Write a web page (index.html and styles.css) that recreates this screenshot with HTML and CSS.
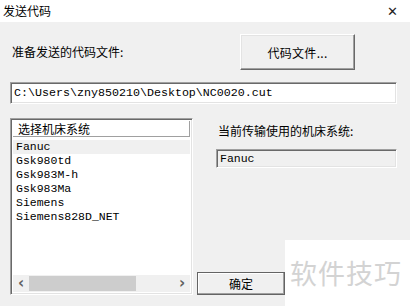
FILE: index.html
```html
<!DOCTYPE html>
<html>
<head>
<meta charset="utf-8">
<link rel="stylesheet" href="styles.css">
</head>
<body>
<div class="window">
  <div class="titlebar">
    <span class="title">发送代码</span>
    <span class="close">✕</span>
  </div>
  <div class="body">
    <div class="row1">
      <span class="label">准备发送的代码文件:</span>
      <button class="btn btn-file">代码文件...</button>
    </div>
    <div class="path">C:\Users\zny850210\Desktop\NC0020.cut</div>
    <div class="lower">
      <div class="listbox">
        <div class="list-header">选择机床系统</div>
        <div class="items">
          <div class="item selected">Fanuc</div>
          <div class="item">Gsk980td</div>
          <div class="item">Gsk983M-h</div>
          <div class="item">Gsk983Ma</div>
          <div class="item">Siemens</div>
          <div class="item">Siemens828D_NET</div>
        </div>
        <div class="hscroll">
          <span class="arrow">&lsaquo;</span>
          <span class="track"><span class="thumb"></span></span>
          <span class="arrow">&rsaquo;</span>
        </div>
      </div>
      <div class="right">
        <div class="rlabel">当前传输使用的机床系统:</div>
        <div class="current">Fanuc</div>
        <div class="spacer"></div>
        <button class="btn btn-ok">确定</button>
      </div>
    </div>
    <div class="watermark">软件技巧</div>
  </div>
</div>
</body>
</html>
```
FILE: styles.css
```css
html, body {
  margin: 0;
  padding: 0;
  background: #f0f0f0;
}
.window {
  width: 410px;
  height: 306px;
  overflow: hidden;
  font-family: "Noto Sans CJK SC", "Liberation Sans", sans-serif;
  font-size: 12px;
  color: #000;
}
.titlebar {
  height: 22px;
  background: #fff;
  display: flex;
  align-items: center;
  justify-content: space-between;
  padding: 0 12px 0 3px;
}
.title {
  font-size: 12px;
  line-height: 22px;
}
.close {
  font-size: 13px;
  color: #222;
  font-family: "DejaVu Sans", sans-serif;
}
.body {
  position: relative;
  height: 284px;
  background: #f0f0f0;
}
.row1 {
  display: flex;
  align-items: center;
  justify-content: space-between;
  padding: 12px 55px 0 12px;
}
.label {
  font-size: 12px;
  line-height: 16px;
}
.btn {
  font-family: "Noto Sans CJK SC", "Liberation Sans", sans-serif;
  font-size: 12px;
  color: #000;
  background: #f0f0f0;
  padding: 0;
  margin: 0;
  cursor: default;
}
.btn-file {
  width: 115px;
  height: 36px;
  border: 1px solid;
  border-color: #fff #696969 #696969 #fff;
  box-shadow: inset -1px -1px #a0a0a0, inset 1px 1px #e3e3e3;
  letter-spacing: 0.3px;
}
.path {
  margin: 12px 13px 0 10px;
  height: 22px;
  box-sizing: border-box;
  background: #fff;
  border: 1px solid;
  border-color: #a0a0a0 #fff #fff #a0a0a0;
  box-shadow: inset 1px 1px #696969, inset -1px -1px #e3e3e3;
  padding: 0 0 0 3px;
  font-family: "Liberation Mono", monospace;
  font-size: 11.67px;
  line-height: 20px;
  white-space: nowrap;
}
.lower {
  display: grid;
  grid-template-columns: 183px 1fr;
  column-gap: 4px;
  margin: 14px 0 0 10px;
  height: 177px;
}
.listbox {
  display: flex;
  flex-direction: column;
  background: #fff;
  border: 1px solid;
  border-color: #a0a0a0 #fff #fff #a0a0a0;
  box-shadow: inset 1px 1px #696969, inset -1px -1px #e3e3e3;
  padding: 2px 2px 2px 2px;
  box-sizing: border-box;
}
.list-header {
  height: 16px;
  box-sizing: border-box;
  border-bottom: 1px solid #a0a0a0;
  border-right: 1px solid #a0a0a0;
  background: #fff;
  padding-left: 5px;
  line-height: 15px;
  font-size: 12px;
}
.items {
  flex: 1;
  padding-top: 3px;
}
.item {
  font-family: "Liberation Mono", monospace;
  font-size: 11.5px;
  line-height: 14px;
  height: 14px;
  padding-left: 3px;
  white-space: nowrap;
}
.item.selected {
  background: #f0f0f0;
}
.hscroll {
  height: 17px;
  display: flex;
  align-items: stretch;
  background: #f0f0f0;
}
.arrow {
  width: 16px;
  text-align: center;
  font-family: "DejaVu Sans", sans-serif;
  font-size: 15px;
  line-height: 16px;
  color: #606060;
  font-weight: bold;
}
.track {
  flex: 1;
  display: flex;
  align-items: stretch;
  padding: 1px 0;
}
.thumb {
  width: 107px;
  background: #cdcdcd;
}
.right {
  display: flex;
  flex-direction: column;
  align-items: flex-start;
}
.rlabel {
  margin: 6px 0 0 21px;
  line-height: 14px;
  font-size: 12px;
}
.current {
  margin: 11px 0 0 19px;
  width: 181px;
  height: 19px;
  box-sizing: border-box;
  border: 1px solid;
  border-color: #a0a0a0 #fff #fff #a0a0a0;
  box-shadow: inset 1px 1px #696969, inset -1px -1px #e3e3e3;
  padding-left: 3px;
  font-family: "Liberation Mono", monospace;
  font-size: 11.5px;
  line-height: 17px;
  background: #f0f0f0;
}
.spacer {
  flex: 1;
}
.btn-ok {
  width: 88px;
  height: 23px;
  margin-bottom: 0;
  border: 1px solid #646464;
  box-shadow: inset -1px -1px #a0a0a0, inset 1px 1px #fff;
  box-sizing: border-box;
}
.watermark {
  position: absolute;
  left: 285px;
  top: 218px;
  width: 125px;
  height: 66px;
  background: #fff;
  color: #d3d3d3;
  font-size: 27px;
  line-height: 66px;
  padding-left: 5px;
  letter-spacing: 1px;
  box-sizing: border-box;
  white-space: nowrap;
}
```
